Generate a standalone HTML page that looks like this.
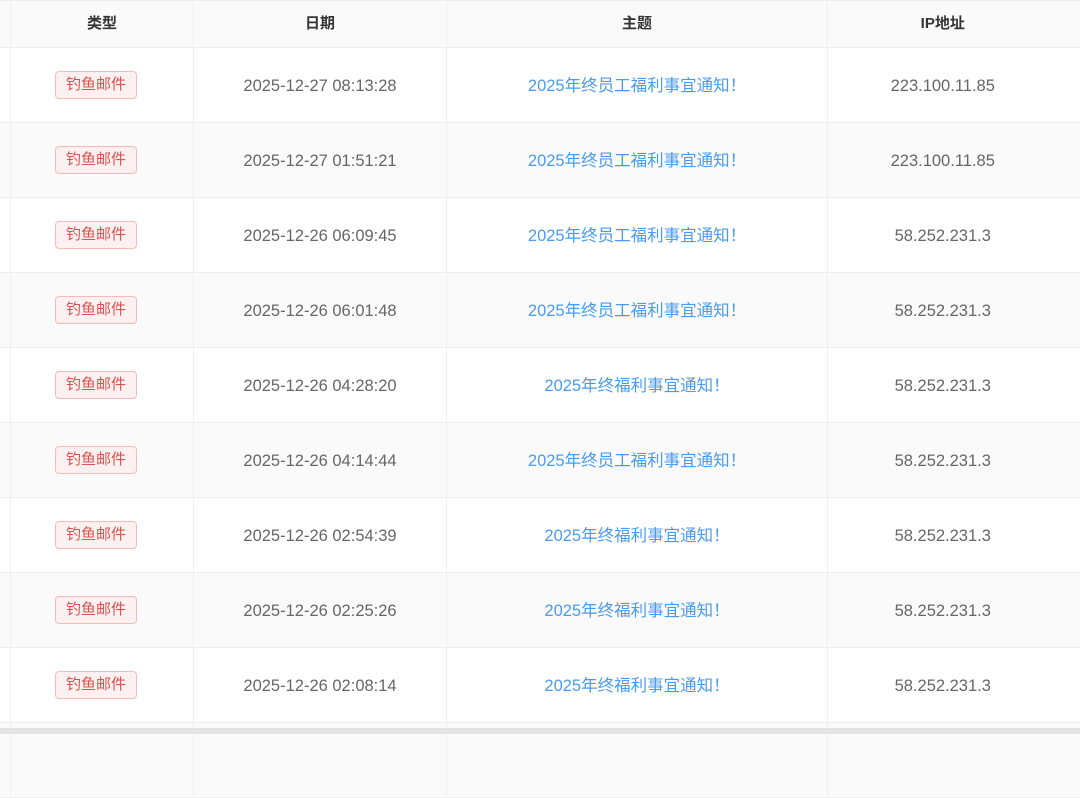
<!DOCTYPE html>
<html><head><meta charset="utf-8"><style>
body{margin:0;width:1080px;height:734px;overflow:hidden;background:#fff;font-family:"Liberation Sans","Noto Sans CJK SC",sans-serif;position:relative}
table{border-collapse:collapse;position:absolute;left:-1px;top:0;table-layout:fixed;width:1098px}
td,th{border:1px solid #efefef;text-align:center;padding:0;font-size:16.5px;vertical-align:middle;line-height:20px}
th{height:46px;background:#fafafa;color:#333;font-weight:bold;font-size:15px}
td{height:72px;color:#666;padding-top:2px}
tr:nth-child(odd) td{background:#fafafa}
td:nth-child(5),th:nth-child(5){border-right:none}
td:nth-child(6),th:nth-child(6){border-left:none;border-right:none}
.tag{display:inline-block;height:26px;line-height:26px;padding:0 10px;border:1px solid #f7b9b9;background:#fdf0f0;color:#d9534f;border-radius:4px;font-size:15px;vertical-align:middle;position:relative;left:-6px;top:-1px}
.l{color:#4a9bf0}
.sb{position:absolute;left:0;top:728px;width:1080px;height:6px;background:#e3e3e3}
</style></head><body>
<table>
<colgroup><col style="width:11px"><col style="width:183px"><col style="width:253px"><col style="width:381px"><col style="width:230px"><col style="width:40px"></colgroup>
<tr><th></th><th>类型</th><th>日期</th><th>主题</th><th>IP地址</th><th></th></tr>
<tr><td></td><td><span class="tag">钓鱼邮件</span></td><td>2025-12-27 08:13:28</td><td class="l">2025年终员工福利事宜通知！</td><td>223.100.11.85</td><td></td></tr>
<tr><td></td><td><span class="tag">钓鱼邮件</span></td><td>2025-12-27 01:51:21</td><td class="l">2025年终员工福利事宜通知！</td><td>223.100.11.85</td><td></td></tr>
<tr><td></td><td><span class="tag">钓鱼邮件</span></td><td>2025-12-26 06:09:45</td><td class="l">2025年终员工福利事宜通知！</td><td>58.252.231.3</td><td></td></tr>
<tr><td></td><td><span class="tag">钓鱼邮件</span></td><td>2025-12-26 06:01:48</td><td class="l">2025年终员工福利事宜通知！</td><td>58.252.231.3</td><td></td></tr>
<tr><td></td><td><span class="tag">钓鱼邮件</span></td><td>2025-12-26 04:28:20</td><td class="l">2025年终福利事宜通知！</td><td>58.252.231.3</td><td></td></tr>
<tr><td></td><td><span class="tag">钓鱼邮件</span></td><td>2025-12-26 04:14:44</td><td class="l">2025年终员工福利事宜通知！</td><td>58.252.231.3</td><td></td></tr>
<tr><td></td><td><span class="tag">钓鱼邮件</span></td><td>2025-12-26 02:54:39</td><td class="l">2025年终福利事宜通知！</td><td>58.252.231.3</td><td></td></tr>
<tr><td></td><td><span class="tag">钓鱼邮件</span></td><td>2025-12-26 02:25:26</td><td class="l">2025年终福利事宜通知！</td><td>58.252.231.3</td><td></td></tr>
<tr><td></td><td><span class="tag">钓鱼邮件</span></td><td>2025-12-26 02:08:14</td><td class="l">2025年终福利事宜通知！</td><td>58.252.231.3</td><td></td></tr>
<tr><td></td><td></td><td></td><td></td><td></td><td></td></tr>
</table>
<div class="sb"></div>
</body></html>
